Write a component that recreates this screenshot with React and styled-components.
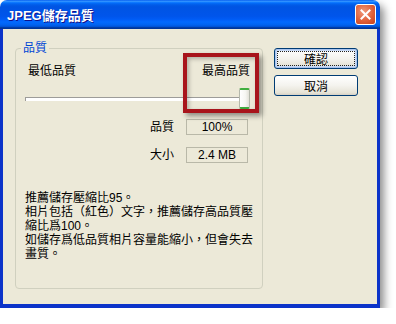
import styled, { createGlobalStyle } from "styled-components"

const GlobalStyle = createGlobalStyle`
  body {
    margin: 0;
    background: #fff;
    font-family: "Liberation Sans", "Noto Sans CJK TC", sans-serif;
    font-size: 12px;
    color: #000;
  }
`

const Window = styled.div`
  position: relative;
  width: 380px;
  height: 308px;
  display: flex;
  flex-direction: column;
  border-radius: 7px 7px 0 0;
  box-shadow: 4px 5px 8px rgba(0, 0, 0, 0.45);
`

const TitleBar = styled.div`
  height: 29px;
  flex-shrink: 0;
  display: flex;
  align-items: center;
  justify-content: space-between;
  padding: 0 4px 0 7px;
  box-sizing: border-box;
  border-radius: 7px 7px 0 0;
  background: linear-gradient(
    180deg,
    #0058ee 0%,
    #3593ff 4%,
    #288eff 6%,
    #127dff 8%,
    #036ffc 10%,
    #0262ee 14%,
    #0057e5 20%,
    #0054e3 24%,
    #0055eb 56%,
    #005bf5 66%,
    #026afe 76%,
    #0062ef 86%,
    #0052d6 92%,
    #0040ab 94%,
    #003092 100%
  );
`

const Title = styled.span`
  color: #fff;
  font-weight: bold;
  font-size: 13px;
  text-shadow: 1px 1px 0 #0f1089;
`

const CloseButton = styled.div`
  width: 21px;
  height: 21px;
  box-sizing: border-box;
  border: 1px solid #fff;
  border-radius: 3px;
  display: flex;
  align-items: center;
  justify-content: center;
  background: radial-gradient(circle at 40% 35%, #f09a7c 0%, #e0603a 55%, #c4401c 100%);
`

const Body = styled.div`
  flex: 1;
  display: flex;
  gap: 11px;
  padding: 13px 0 0 12px;
  background: #ece9d8;
  border: solid #0b33c9;
  border-width: 0 3px 4px 3px;
`

const GroupBox = styled.fieldset`
  width: 248px;
  height: 247px;
  box-sizing: border-box;
  margin: 0;
  padding: 8px 12px 0 12px;
  min-width: 0;
  border: 1px solid #d0d0bf;
  border-radius: 4px;
  display: flex;
  flex-direction: column;
`

const Legend = styled.legend`
  margin-left: -7px;
  padding: 0 2px;
  line-height: 13px;
  color: #0046d5;
`

const LabelRow = styled.div`
  display: flex;
  justify-content: space-between;
  line-height: 16px;
`

const Slider = styled.div`
  display: flex;
  align-items: center;
  height: 21px;
  margin: 9px 0 0 -3px;
`

const Track = styled.div`
  flex: 1;
  height: 3px;
  border-top: 1px solid #9d9c99;
  border-left: 1px solid #9d9c99;
  background: #fff;
`

const Thumb = styled.div`
  width: 11px;
  height: 21px;
  box-sizing: border-box;
  margin-left: -6px;
  border: 1px solid #b4b8ac;
  border-top: 2px solid #3fae3f;
  border-bottom: 2px solid #3fae3f;
  border-radius: 2px;
  background: linear-gradient(90deg, #ffffff 0%, #f6f6f2 60%, #e2e1d8 100%);
`

const Stats = styled.div`
  display: grid;
  grid-template-columns: auto 62px;
  justify-content: end;
  align-items: center;
  column-gap: 12px;
  row-gap: 12px;
  margin: 10px 2px 0 0;
`

const StatLabel = styled.span`
  line-height: 16px;
`

const ValueBox = styled.div`
  height: 16px;
  line-height: 14px;
  box-sizing: border-box;
  border: 1px solid #b9b8a8;
  text-align: center;
`

const Notes = styled.div`
  margin: 28px 0 0 -3px;
  line-height: 14px;
`

const NoteLine = styled.div`
  white-space: nowrap;
`

const ButtonColumn = styled.div`
  display: flex;
  flex-direction: column;
  gap: 6px;
  margin-top: 6px;
`

const Button = styled.div`
  position: relative;
  width: 84px;
  height: 21px;
  box-sizing: border-box;
  display: flex;
  align-items: center;
  justify-content: center;
  border: 1px solid #003c74;
  border-radius: 3px;
  background: linear-gradient(180deg, #ffffff 0%, #f4f3ee 50%, #e6e3d6 88%, #d6d0c5 100%);
  box-shadow: ${(p) => (p.$default ? "inset 0 0 0 1px #aac4ee, inset 0 0 0 2px #c8daf6" : "none")};

  &::after {
    content: "";
    display: ${(p) => (p.$default ? "block" : "none")};
    position: absolute;
    inset: 2px;
    border: 1px dotted #222;
  }
`

const Highlight = styled.div`
  position: absolute;
  left: 183px;
  top: 53px;
  width: 76px;
  height: 60px;
  box-sizing: border-box;
  border: 4px solid #a8141b;
  box-shadow: 3px 3px 5px rgba(0, 0, 0, 0.4), inset 2px 2px 4px rgba(0, 0, 0, 0.25);
  pointer-events: none;
`

export default function App() {
  return (
    <>
      <GlobalStyle />
      <Window>
        <TitleBar>
          <Title>JPEG儲存品質</Title>
          <CloseButton>
            <svg width="11" height="11" viewBox="0 0 11 11">
              <path d="M1.5 1.5 L9.5 9.5 M9.5 1.5 L1.5 9.5" stroke="#fff" strokeWidth="2" strokeLinecap="square" />
            </svg>
          </CloseButton>
        </TitleBar>
        <Body>
          <GroupBox>
            <Legend>品質</Legend>
            <LabelRow>
              <span>最低品質</span>
              <span>最高品質</span>
            </LabelRow>
            <Slider>
              <Track />
              <Thumb />
            </Slider>
            <Stats>
              <StatLabel>品質</StatLabel>
              <ValueBox>100%</ValueBox>
              <StatLabel>大小</StatLabel>
              <ValueBox>2.4 MB</ValueBox>
            </Stats>
            <Notes>
              <NoteLine>推薦儲存壓縮比95。</NoteLine>
              <NoteLine>相片包括（紅色）文字，推薦儲存高品質壓</NoteLine>
              <NoteLine>縮比爲100。</NoteLine>
              <NoteLine>如儲存爲低品質相片容量能縮小，但會失去</NoteLine>
              <NoteLine>畫質。</NoteLine>
            </Notes>
          </GroupBox>
          <ButtonColumn>
            <Button $default>確認</Button>
            <Button>取消</Button>
          </ButtonColumn>
        </Body>
        <Highlight />
      </Window>
    </>
  )
}
